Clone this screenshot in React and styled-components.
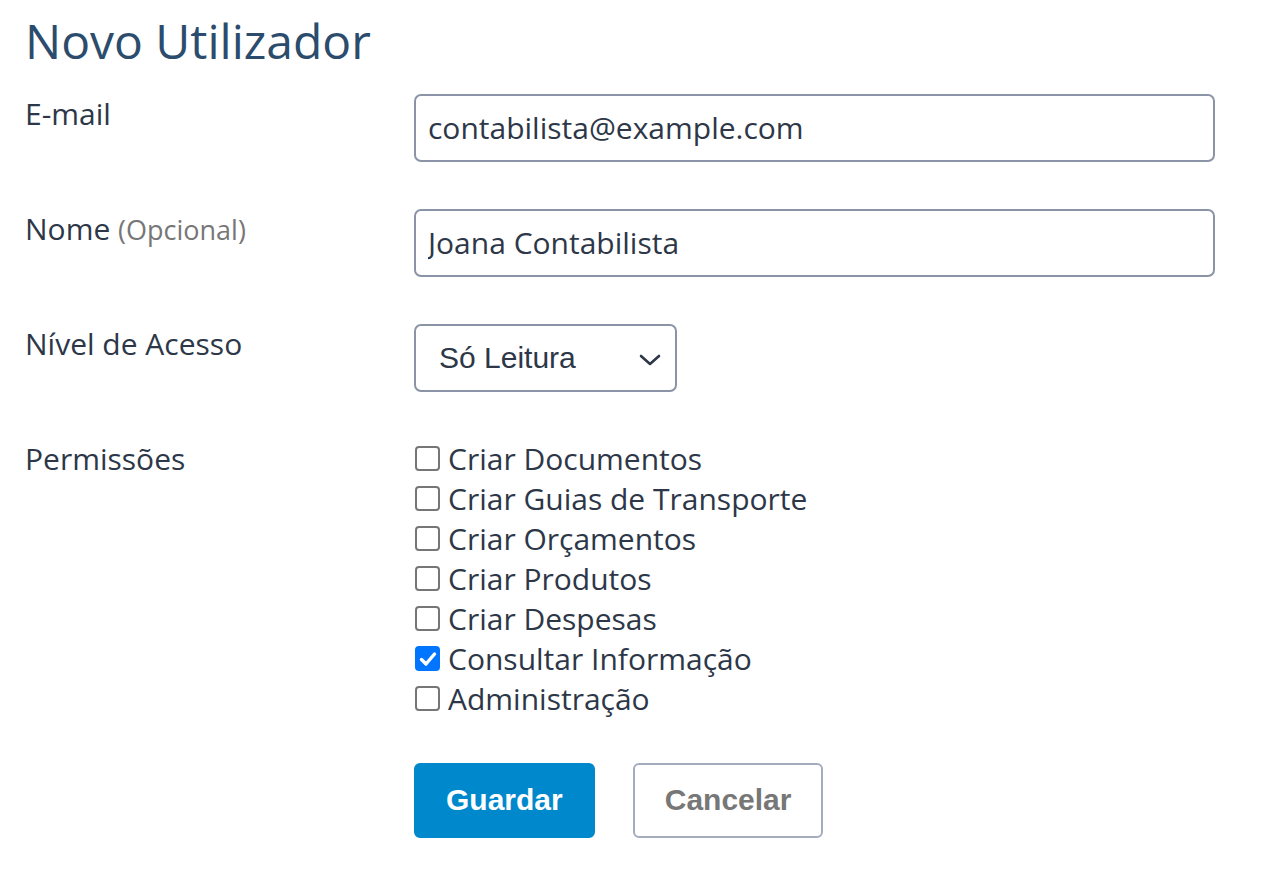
import React, { useState } from "react";
import styled, { createGlobalStyle } from "styled-components";

const Global = createGlobalStyle`
  html, body { margin: 0; padding: 0; background: #ffffff; }
  body { font-family: "Open Sans", "Noto Sans", sans-serif; color: #2d3748; }
  * { box-sizing: border-box; }
`;

const Page = styled.div`
  padding: 12px 25px 40px 25px;
`;

const Title = styled.h1`
  margin: 0 0 24px 0;
  font-family: "Open Sans", sans-serif;
  font-weight: 400;
  font-size: 48px;
  line-height: 1.2;
  color: #2b4c6c;
`;

const Form = styled.form`
  display: grid;
  grid-template-columns: 389px 801px;
  row-gap: 47px;
  align-items: start;
`;

const Label = styled.label`
  font-size: 30px;
  line-height: 1.3;
  color: #2d3748;
`;

const Optional = styled.span`
  font-size: 27px;
  color: #777777;
`;

const TextInput = styled.input`
  width: 801px;
  height: 68px;
  padding: 0 12px;
  border: 2px solid #8a94a6;
  border-radius: 7px;
  font-family: "Open Sans", sans-serif;
  font-size: 30px;
  color: #2d3748;
  background: #fff;
  outline: none;
`;

const SelectWrap = styled.div`
  position: relative;
  width: 263px;
  height: 68px;
`;

const Select = styled.select`
  appearance: none;
  width: 100%;
  height: 100%;
  padding: 0 23px;
  border: 2px solid #8a94a6;
  border-radius: 7px;
  background: #fff;
  font-family: "Liberation Sans", Arial, sans-serif;
  font-size: 30px;
  color: #2d3748;
  outline: none;
`;

const Chevron = styled.svg`
  position: absolute;
  right: 16px;
  top: 30px;
  pointer-events: none;
`;

const CheckList = styled.div`
  display: flex;
  flex-direction: column;
`;

const CheckRow = styled.label`
  display: flex;
  align-items: center;
  height: 40px;
  font-size: 30px;
  color: #2d3748;
  gap: 8px;
`;

const Box = styled.span`
  flex: none;
  width: 25px;
  height: 25px;
  margin-left: 1px;
  border-radius: 4px;
  border: ${(p) => (p.$on ? "none" : "2px solid #767676")};
  background: ${(p) => (p.$on ? "#0075ff" : "#fff")};
  display: flex;
  align-items: center;
  justify-content: center;
`;

const HiddenCheck = styled.input`
  position: absolute;
  opacity: 0;
  width: 0;
  height: 0;
`;

const Actions = styled.div`
  grid-column: 2;
  display: flex;
  gap: 38px;
  margin-top: -3px;
`;

const Button = styled.button`
  height: 75px;
  padding: 0 30px;
  border-radius: 6px;
  font-family: "Liberation Sans", Arial, sans-serif;
  font-weight: 700;
  font-size: 30px;
  cursor: pointer;
  border: 2px solid ${(p) => (p.$primary ? "#0088cc" : "#a3adbd")};
  background: ${(p) => (p.$primary ? "#0088cc" : "#ffffff")};
  color: ${(p) => (p.$primary ? "#ffffff" : "#777777")};
`;

const perms = [
  ["Criar Documentos", false],
  ["Criar Guias de Transporte", false],
  ["Criar Orçamentos", false],
  ["Criar Produtos", false],
  ["Criar Despesas", false],
  ["Consultar Informação", true],
  ["Administração", false],
];

function Check({ label, initial }) {
  const [on, setOn] = useState(initial);
  return (
    <CheckRow>
      <HiddenCheck type="checkbox" checked={on} onChange={() => setOn(!on)} />
      <Box $on={on}>
        {on && (
          <svg width="18" height="18" viewBox="0 0 18 18">
            <path d="M2.5 9.5 L7 14 L15.5 4" fill="none" stroke="#fff" strokeWidth="3.4" strokeLinecap="round" strokeLinejoin="round" />
          </svg>
        )}
      </Box>
      {label}
    </CheckRow>
  );
}

export default function App() {
  return (
    <Page>
      <Global />
      <Title>Novo Utilizador</Title>
      <Form onSubmit={(e) => e.preventDefault()}>
        <Label htmlFor="email">E-mail</Label>
        <TextInput id="email" defaultValue="contabilista@example.com" />

        <Label htmlFor="nome">
          Nome <Optional>(Opcional)</Optional>
        </Label>
        <TextInput id="nome" defaultValue="Joana Contabilista" />

        <Label htmlFor="nivel">Nível de Acesso</Label>
        <SelectWrap>
          <Select id="nivel" defaultValue="leitura">
            <option value="leitura">Só Leitura</option>
            <option value="total">Acesso Total</option>
          </Select>
          <Chevron width="22" height="12" viewBox="0 0 22 12">
            <path d="M2 2 L11 10 L20 2" fill="none" stroke="#2d3748" strokeWidth="2.6" strokeLinecap="round" strokeLinejoin="round" />
          </Chevron>
        </SelectWrap>

        <Label>Permissões</Label>
        <CheckList>
          {perms.map(([l, c]) => (
            <Check key={l} label={l} initial={c} />
          ))}
        </CheckList>

        <Actions>
          <Button $primary type="submit">Guardar</Button>
          <Button type="button">Cancelar</Button>
        </Actions>
      </Form>
    </Page>
  );
}
